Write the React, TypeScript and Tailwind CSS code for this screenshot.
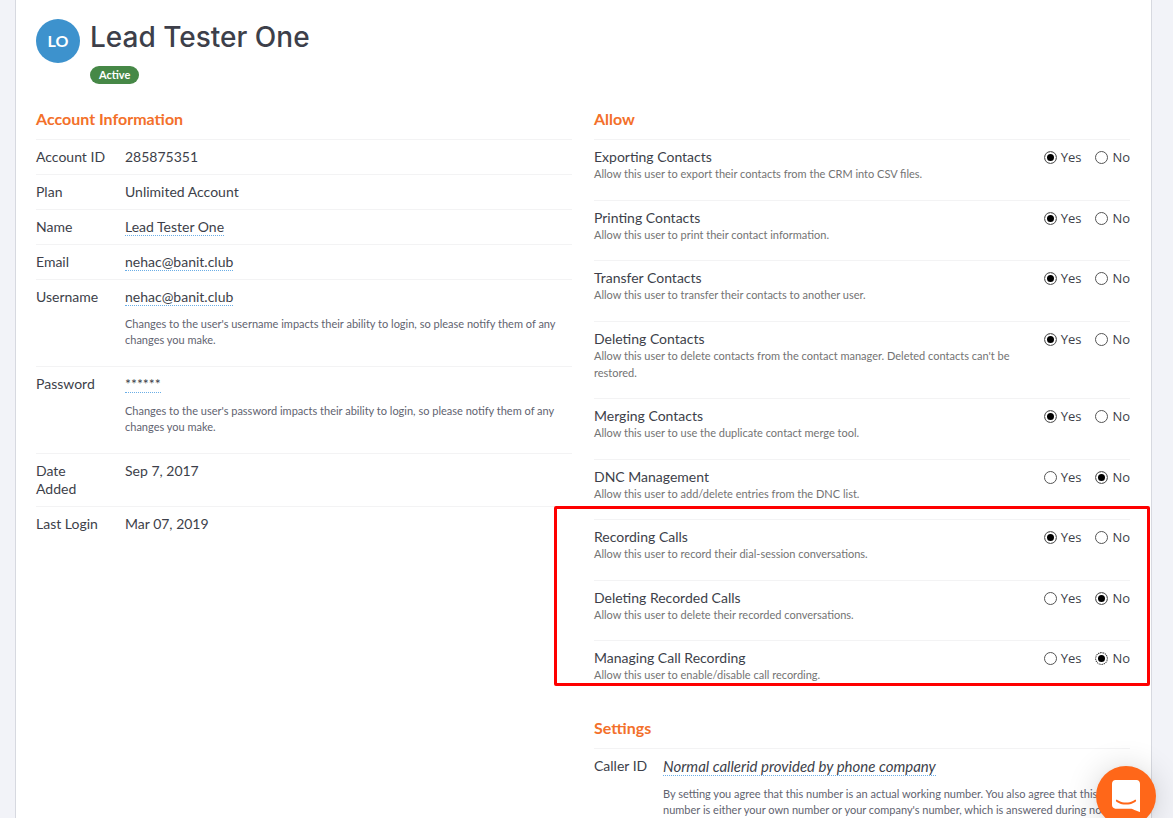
import React, { useState } from 'react';

interface AccountRow {
  label: string;
  value: string;
  editable?: boolean;
  help?: string;
}

interface Permission {
  id: string;
  title: string;
  description: string;
  allowed: boolean;
  focused?: boolean; // last option the admin touched
}

const accountRows: AccountRow[] = [
  { label: 'Account\u00a0ID', value: '285875351' },
  { label: 'Plan', value: 'Unlimited Account' },
  { label: 'Name', value: 'Lead Tester One', editable: true },
  { label: 'Email', value: 'nehac@banit.club', editable: true },
  {
    label: 'Username',
    value: 'nehac@banit.club',
    editable: true,
    help: "Changes to the user's username impacts their ability to login, so please notify them of any changes you make.",
  },
  {
    label: 'Password',
    value: '******',
    editable: true,
    help: "Changes to the user's password impacts their ability to login, so please notify them of any changes you make.",
  },
  { label: 'Date Added', value: 'Sep 7, 2017' },
  { label: 'Last Login', value: 'Mar 07, 2019' },
];

const contactPermissions: Permission[] = [
  { id: 'export', title: 'Exporting Contacts', description: 'Allow this user to export their contacts from the CRM into CSV files.', allowed: true },
  { id: 'print', title: 'Printing Contacts', description: 'Allow this user to print their contact information.', allowed: true },
  { id: 'transfer', title: 'Transfer Contacts', description: 'Allow this user to transfer their contacts to another user.', allowed: true },
  { id: 'delete', title: 'Deleting Contacts', description: "Allow this user to delete contacts from the contact manager. Deleted contacts can't be restored.", allowed: true },
  { id: 'merge', title: 'Merging Contacts', description: 'Allow this user to use the duplicate contact merge tool.', allowed: true },
  { id: 'dnc', title: 'DNC Management', description: 'Allow this user to add/delete entries from the DNC list.', allowed: false },
];

const recordingPermissions: Permission[] = [
  { id: 'record', title: 'Recording Calls', description: 'Allow this user to record their dial-session conversations.', allowed: true },
  { id: 'delete-recorded', title: 'Deleting Recorded Calls', description: 'Allow this user to delete their recorded conversations.', allowed: false },
  { id: 'manage-recording', title: 'Managing Call Recording', description: 'Allow this user to enable/disable call recording.', allowed: false, focused: true },
];

const SectionTitle = ({ children }: { children: React.ReactNode }) => (
  <h2 className="pb-[10px] text-base leading-5 font-bold text-[#f3702a]">{children}</h2>
);

const HelpText = ({ children }: { children: React.ReactNode }) => (
  <p className="my-[10px] text-[11px] leading-4 text-[#5f6370]">{children}</p>
);

interface RadioOptionProps {
  name: string;
  label: string;
  checked: boolean;
  focused?: boolean;
  onSelect: () => void;
}

const RadioOption = ({ name, label, checked, focused, onSelect }: RadioOptionProps) => (
  <label className="flex items-center gap-1 font-['Open_Sans',sans-serif] text-[13px] leading-[18px]">
    <input
      type="radio"
      name={name}
      checked={checked}
      autoFocus={focused}
      onChange={onSelect}
      className="size-[13px] appearance-none rounded-full border border-[#555] bg-white outline-none checked:bg-black checked:bg-clip-padding checked:shadow-[inset_0_0_0_2px_#fff] focus:border-dotted focus:border-black"
    />
    {label}
  </label>
);

const PermissionRow = ({ permission }: { permission: Permission }) => {
  const [allowed, setAllowed] = useState(permission.allowed);

  return (
    <li className="flex items-start justify-between border-t border-[#f3f3f4] pt-2 odd:pb-[18px] even:pb-[17px]">
      <div className="max-w-[430px]">
        <h3 className="text-sm leading-[17px]">{permission.title}</h3>
        <p className="text-[11px] leading-[17px] text-[#737373]">{permission.description}</p>
      </div>
      <div className="flex shrink-0 gap-[14px]" role="radiogroup" aria-label={permission.title}>
        <RadioOption name={permission.id} label="Yes" checked={allowed} onSelect={() => setAllowed(true)} />
        <RadioOption name={permission.id} label="No" checked={!allowed} focused={permission.focused} onSelect={() => setAllowed(false)} />
      </div>
    </li>
  );
};

const editableClass = 'border-b border-dotted border-[#6aaee6]';

const App = () => {
  return (
    <div className="min-h-screen bg-[#f2f3f8] pr-[21px] pl-[15px] font-['Lato',sans-serif] text-[#3d3f4a]">
      <main className="min-h-screen border-x border-[#d7d9e0] bg-white pt-[19px] pr-[21px] pl-5">
        <header className="flex gap-[10px]">
          <div className="flex size-11 shrink-0 items-center justify-center rounded-full bg-[#3d92cd] text-base font-bold text-white">
            LO
          </div>
          <div>
            <h1 className="font-['Inter',sans-serif] text-[28px] leading-9 font-medium">Lead Tester One</h1>
            <span className="mt-[11px] block w-fit rounded-full bg-[#468847] px-[9px] text-[11px] leading-[18px] font-bold text-white">
              Active
            </span>
          </div>
        </header>

        <div className="mt-[25px] grid grid-cols-2 gap-[22px]">
          <section>
            <SectionTitle>Account Information</SectionTitle>
            <table className="w-full table-fixed text-left text-sm leading-[18px]">
              <tbody>
                {accountRows.map((row) => (
                  <tr key={row.label} className="border-t border-[#f3f3f4] align-top">
                    <th scope="row" className="w-[89px] py-2 pr-5 font-normal">{row.label}</th>
                    <td className="py-2">
                      {row.editable ? <a href="#edit" className={editableClass}>{row.value}</a> : row.value}
                      {row.help && <HelpText>{row.help}</HelpText>}
                    </td>
                  </tr>
                ))}
              </tbody>
            </table>
          </section>

          <div>
            <section>
              <SectionTitle>Allow</SectionTitle>
              <ul>
                {contactPermissions.map((permission) => (
                  <PermissionRow key={permission.id} permission={permission} />
                ))}
              </ul>
              <div className="relative">
                <ul>
                  {recordingPermissions.map((permission) => (
                    <PermissionRow key={permission.id} permission={permission} />
                  ))}
                </ul>
                {/* Callout around the recording permissions */}
                <div className="pointer-events-none absolute -top-[13px] -right-5 bottom-[15px] -left-10 rounded-xs border-3 border-[#fe0000]" />
              </div>
            </section>

            <section className="mt-[17px]">
              <SectionTitle>Settings</SectionTitle>
              <div className="flex border-t border-[#f3f3f4] pt-2 text-sm leading-[18px]">
                <h3 className="w-[69px] shrink-0">Caller ID</h3>
                <div>
                  <a href="#caller-id" className={`text-[15px] italic ${editableClass}`}>Normal callerid provided by phone company</a>
                  <HelpText>
                    By setting you agree that this number is an actual working number. You also agree that this number is either your own number or your company's number, which is answered during normal
                  </HelpText>
                </div>
              </div>
            </section>
          </div>
        </div>
      </main>

      {/* Chat launcher */}
      <button
        type="button"
        aria-label="Open chat"
        className="fixed right-[17px] -bottom-2 flex size-15 items-center justify-center rounded-full bg-[#ff6719] shadow-[0_1px_6px_rgba(0,0,0,0.06),0_2px_32px_rgba(0,0,0,0.16)]"
      >
        <svg viewBox="0 0 28 32" className="h-8 w-7 fill-white">
          <path d="M28 32s-4.714-1.855-8.527-3.34H3.437C1.54 28.66 0 27.026 0 25.013V3.644C0 1.633 1.54 0 3.437 0h21.125c1.898 0 3.437 1.632 3.437 3.645v18.404H28V32zm-4.139-11.982a.88.88 0 00-1.292-.105c-.03.026-3.015 2.681-8.57 2.681-5.486 0-8.517-2.636-8.571-2.684a.88.88 0 00-1.29.107 1.01 1.01 0 00-.219.708.992.992 0 00.318.664c.142.128 3.537 3.15 9.762 3.15 6.226 0 9.621-3.022 9.763-3.15a.992.992 0 00.317-.664 1.01 1.01 0 00-.218-.707z" />
        </svg>
      </button>
    </div>
  );
};

export default App;
